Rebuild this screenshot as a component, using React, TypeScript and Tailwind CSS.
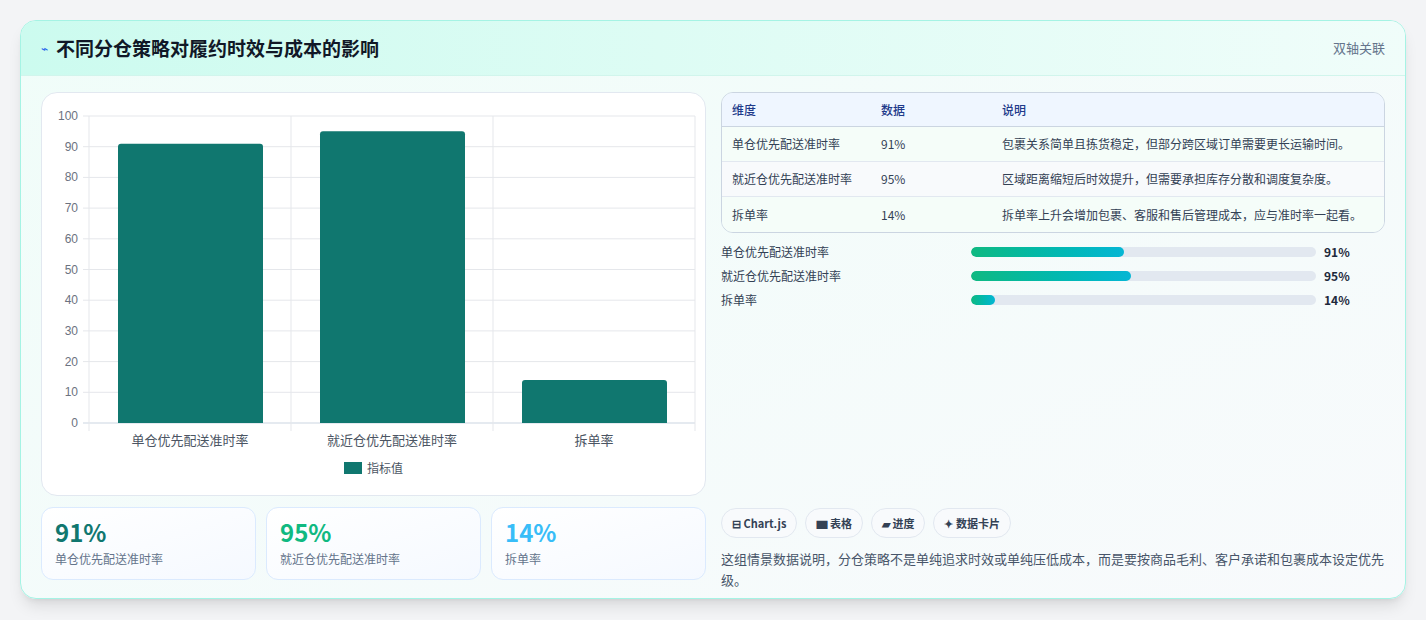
const rows = [
	{ name: "单仓优先配送准时率", value: 91, note: "包裹关系简单且拣货稳定，但部分跨区域订单需要更长运输时间。" },
	{ name: "就近仓优先配送准时率", value: 95, note: "区域距离缩短后时效提升，但需要承担库存分散和调度复杂度。" },
	{ name: "拆单率", value: 14, note: "拆单率上升会增加包裹、客服和售后管理成本，应与准时率一起看。" },
];

const font = { fontFamily: '"Noto Sans CJK SC", "Liberation Sans", sans-serif' };

const Chart = () => {
	// plot area in svg coords (panel origin at 40,92)
	const left = 47, right = 653, top = 23, bottom = 330;
	const h = bottom - top;
	const colW = (right - left) / 3;
	return (
		<svg width="665" height="404" className="block">
			{[0, 10, 20, 30, 40, 50, 60, 70, 80, 90, 100].map((v) => {
				const y = bottom - (v / 100) * h;
				return (
					<g key={v}>
						<line x1={left - 6} x2={right} y1={y} y2={y} stroke={v === 0 ? "#cbd5e1" : "#e5e7eb"} />
						<text x={left - 11} y={y + 4} textAnchor="end" fontSize="12" fill="#6b7280" fontFamily="Liberation Sans, sans-serif">{v}</text>
					</g>
				);
			})}
			{[0, 1, 2, 3].map((i) => (
				<line key={i} x1={left + i * colW} x2={left + i * colW} y1={top} y2={bottom + 8} stroke="#e5e7eb" />
			))}
			{rows.map((r, i) => {
				const bh = (r.value / 100) * h;
				const x = left + i * colW + 29;
				return (
					<g key={r.name}>
						<path d={`M${x} ${bottom} V${bottom - bh + 3} Q${x} ${bottom - bh} ${x + 3} ${bottom - bh} H${x + 142} Q${x + 145} ${bottom - bh} ${x + 145} ${bottom - bh + 3} V${bottom} Z`} fill="#10776f" />
						<text x={left + i * colW + colW / 2} y={352} textAnchor="middle" fontSize="13" fill="#4b5563" style={font}>{r.name}</text>
					</g>
				);
			})}
			<rect x="302" y="369" width="18" height="12" fill="#10776f" />
			<text x="325" y="380" fontSize="12" fill="#4b5563" style={font}>指标值</text>
		</svg>
	);
};

export default function App() {
	const statColors = ["text-[#10776f]", "text-[#10b981]", "text-[#38bdf8]"];
	return (
		<div className="w-[1426px] h-[620px] bg-[#f3f4f6] pt-5 pl-5" style={font}>
			<div className="w-[1386px] h-[579px] rounded-2xl border border-[#a5f3e4] bg-gradient-to-br from-[#f0fdf9] to-[#f8fafc] shadow-lg overflow-hidden">
				<div className="h-[55px] flex items-center justify-between px-5 bg-gradient-to-r from-[#ccfbef] to-[#f0fdfa] border-b border-[#d1f5ec]">
					<div className="flex items-center gap-2">
						<span className="text-[#2563eb] text-xs">⌁</span>
						<span className="text-[19px] font-bold text-[#111827]">不同分仓策略对履约时效与成本的影响</span>
					</div>
					<span className="text-[13px] text-[#64748b]">双轴关联</span>
				</div>
				<div className="flex gap-[15px] px-5 pt-4">
					<div className="w-[665px] flex flex-col gap-[11px]">
						<div className="h-[404px] bg-white rounded-2xl border border-[#e2e8f0]"><Chart /></div>
						<div className="grid grid-cols-3 gap-[10px]">
							{rows.map((r, i) => (
								<div key={r.name} className="h-[73px] rounded-xl border border-[#dbeafe] bg-gradient-to-br from-white to-[#f5f9ff] px-[13px] pt-2">
									<div className={`text-[24px] font-bold leading-8 ${statColors[i]}`}>{r.value}%</div>
									<div className="text-xs text-[#64748b] mt-[3px]">{r.name}</div>
								</div>
							))}
						</div>
					</div>
					<div className="w-[666px] flex flex-col">
						<div className="rounded-xl border border-[#cbd5e1] overflow-hidden text-xs">
							<div className="flex h-[34px] items-center bg-[#eff6ff] text-[#1e3a8a] font-medium border-b border-[#cbd5e1]">
								<div className="w-[159px] pl-[10px]">维度</div>
								<div className="w-[121px]">数据</div>
								<div>说明</div>
							</div>
							{rows.map((r, i) => (
								<div key={r.name} className={`flex h-[35px] items-center text-[#334155] ${i % 2 ? "bg-[#f8fafc]" : "bg-[#f5fdf9]"} ${i < 2 ? "border-b border-[#e2e8f0]" : ""}`}>
									<div className="w-[159px] pl-[10px]">{r.name}</div>
									<div className="w-[121px]">{r.value}%</div>
									<div>{r.note}</div>
								</div>
							))}
						</div>
						<div className="flex flex-col gap-[11px] mt-[12px]">
							{rows.map((r) => (
								<div key={r.name} className="flex items-center h-[13px] text-xs">
									<div className="w-[250px] text-[#334155]">{r.name}</div>
									<div className="w-[345px] h-[10px] rounded-full bg-[#e2e8f0] overflow-hidden">
										<div className="h-full rounded-full bg-gradient-to-r from-[#10b981] to-[#06b6d4]" style={{ width: `${r.value / 2.05}%` }} />
									</div>
									<div className="ml-2 font-bold text-[#1e293b]">{r.value}%</div>
								</div>
							))}
						</div>
						<div className="flex gap-2 mt-[202px]">
							{["⊟ Chart.js", "▆ 表格", "▰ 进度", "✦ 数据卡片"].map((c) => (
								<span key={c} className="h-[30px] px-[10px] flex items-center rounded-full border border-[#e2e8f0] bg-[#f8fafc] text-[11px] font-bold text-[#334155]">{c}</span>
							))}
						</div>
						<p className="mt-[10px] text-[13px] leading-[21px] text-[#475569]">这组情景数据说明，分仓策略不是单纯追求时效或单纯压低成本，而是要按商品毛利、客户承诺和包裹成本设定优先级。</p>
					</div>
				</div>
			</div>
		</div>
	);
}
